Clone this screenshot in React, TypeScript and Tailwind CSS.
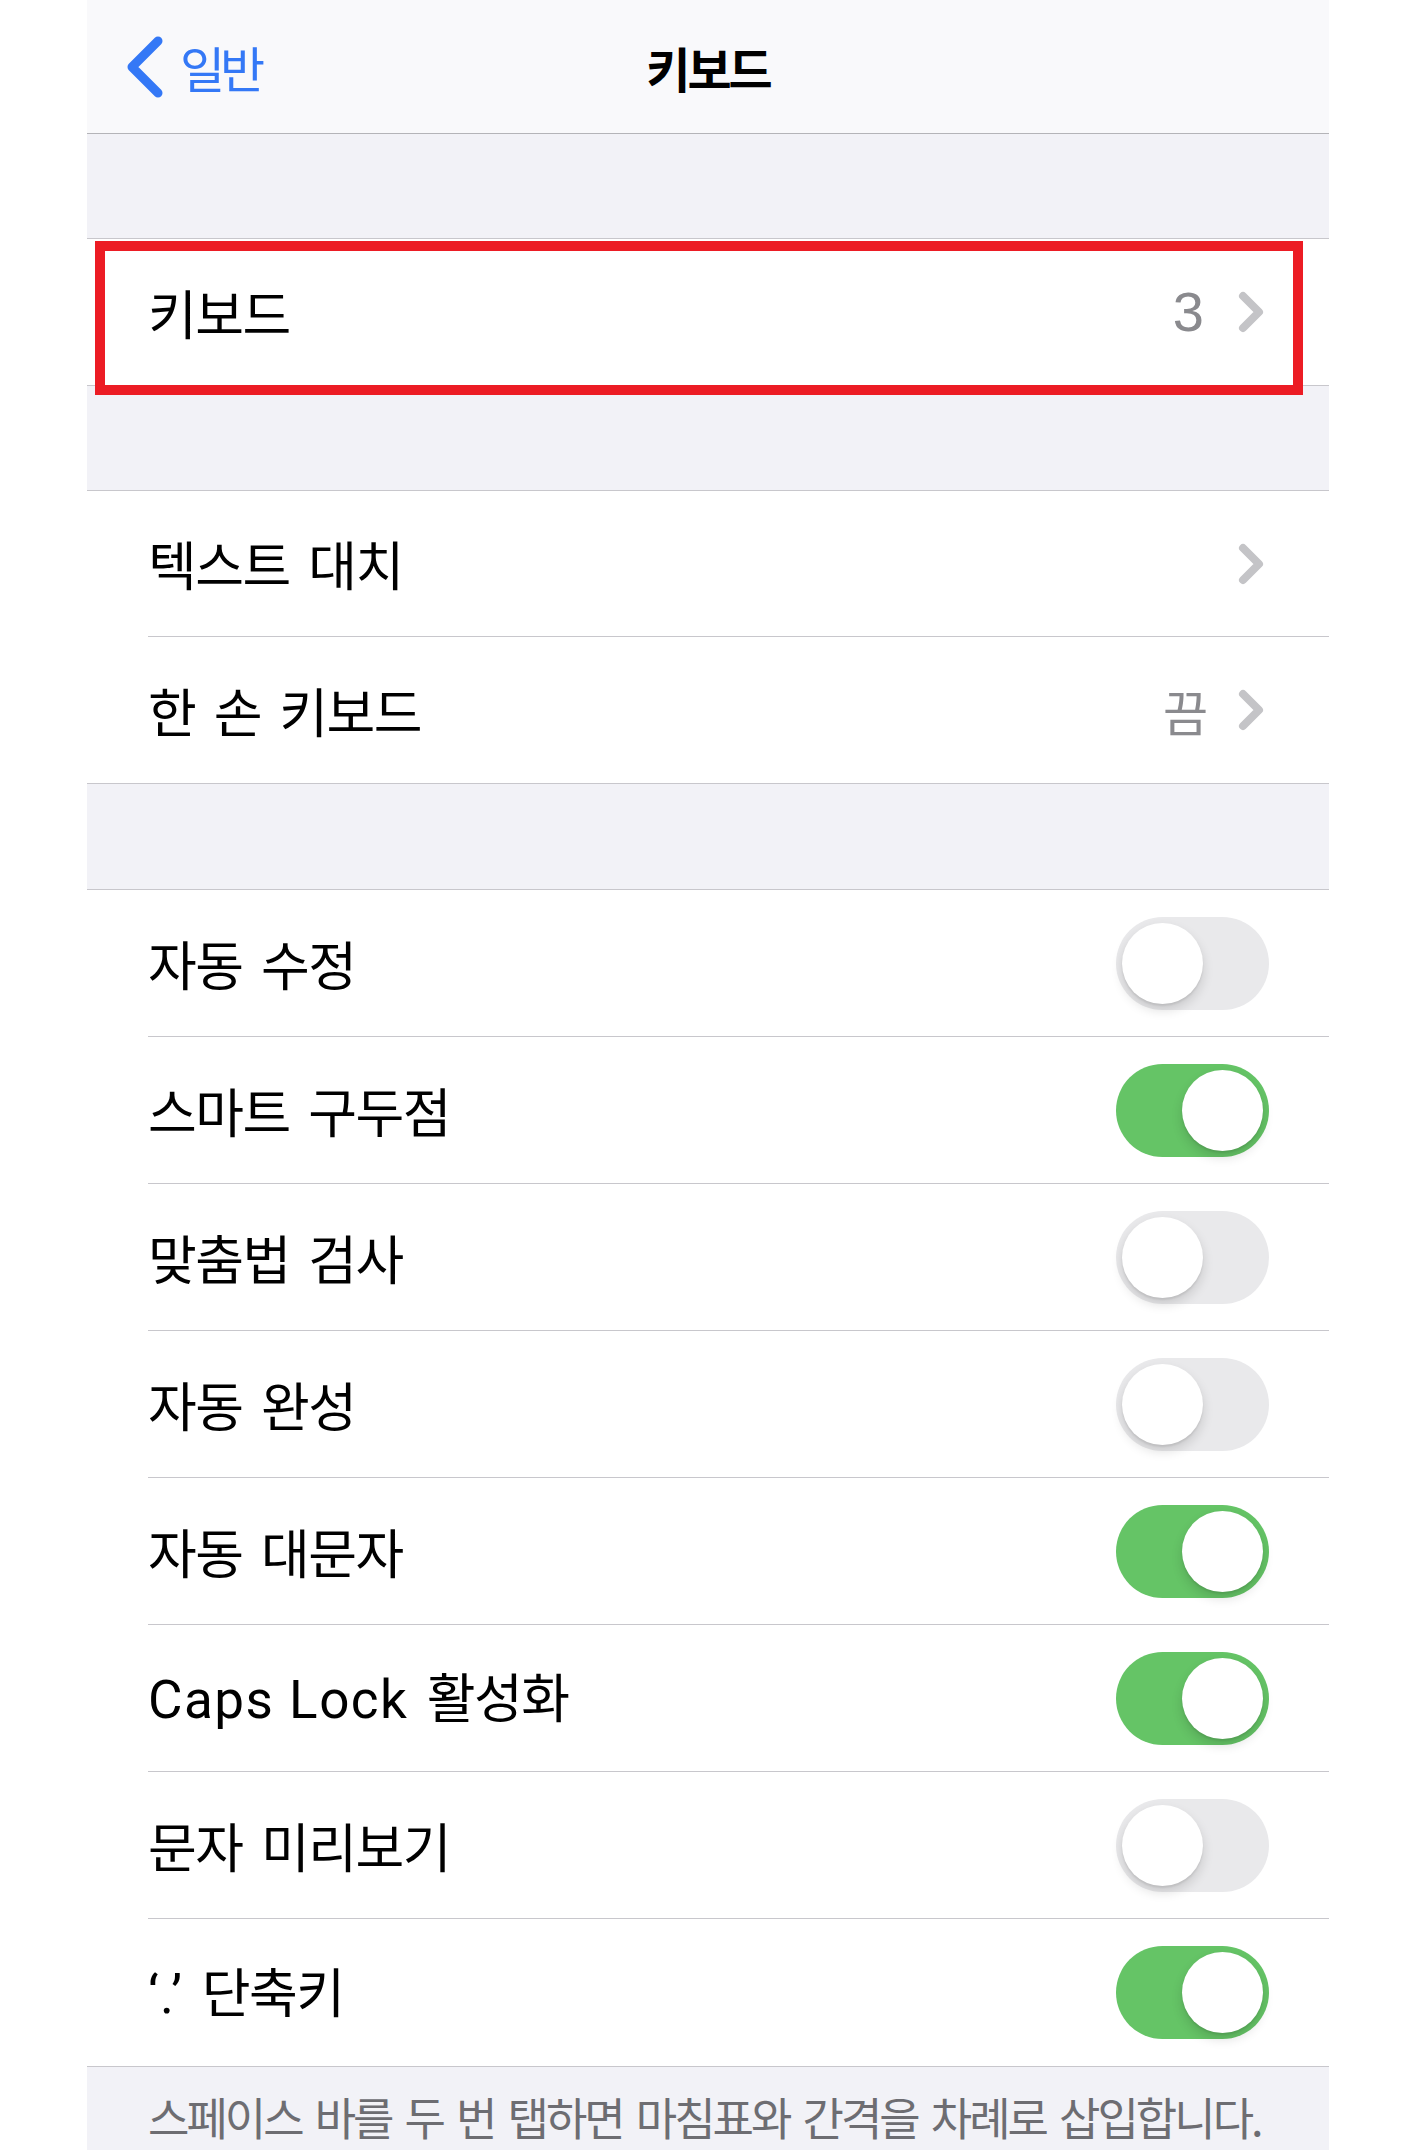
import React from 'react';

const toggles = [
  { label: '자동 수정', on: false },
  { label: '스마트 구두점', on: true },
  { label: '맞춤법 검사', on: false },
  { label: '자동 완성', on: false },
  { label: '자동 대문자', on: true },
  { label: 'Caps Lock 활성화', on: true, latin: 'Caps Lock', rest: '활성화' },
  { label: '문자 미리보기', on: false },
  { label: '‘.’ 단축키', on: true, latin: '‘.’', rest: '단축키' },
];

const Chevron = () => (
  <svg width="26" height="42" viewBox="0 0 26 42" className="mr-[5px] shrink-0">
    <polyline points="5,5 21,21 5,37" fill="none" stroke="#c4c4c7" strokeWidth="8" strokeLinecap="round" strokeLinejoin="round" />
  </svg>
);

const Toggle = ({ on }: { on: boolean }) => (
  <div
    className={
      on
        ? 'flex h-[93px] w-[153px] shrink-0 items-center justify-end rounded-full bg-[#65c466] px-[6px]'
        : 'flex h-[93px] w-[153px] shrink-0 items-center justify-start rounded-full bg-[#e9e9eb] px-[6px]'
    }
  >
    <div className="h-[81px] w-[81px] rounded-full bg-white shadow-[0_6px_12px_rgba(0,0,0,0.14),0_2px_2px_rgba(0,0,0,0.08)]" />
  </div>
);

const Row = ({
  children,
  right,
  last,
  tall,
}: {
  children: React.ReactNode;
  right?: React.ReactNode;
  last?: boolean;
  tall?: boolean;
}) => (
  <div className={tall ? 'flex h-[147px] items-stretch bg-white pl-[61px]' : 'flex h-[146px] items-stretch bg-white pl-[61px]'}>
    <div
      className={
        last
          ? 'flex flex-1 items-center justify-between pr-[60px]'
          : 'flex flex-1 items-center justify-between border-b border-[#c8c7cc] pr-[60px]'
      }
    >
      <span className="whitespace-nowrap text-[53px] leading-none tracking-[-1.5px] text-black [word-spacing:8px]">
        {children}
      </span>
      {right}
    </div>
  </div>
);

export default function App() {
  return (
    <div className="min-h-[2150px] w-full bg-white font-['Noto_Sans_CJK_KR','Noto_Sans',sans-serif]">
      <div className="ml-[87px] w-[1242px] overflow-hidden bg-[#f2f2f7]">
        {/* nav bar */}
        <div className="grid h-[134px] grid-cols-[1fr_auto_1fr] items-center border-b border-[#b4b4b8] bg-[#f9f9fb]">
          <div className="flex items-center gap-[16px] pl-[39px] text-[#3478f6]">
            <svg width="38" height="64" viewBox="0 0 38 64">
              <polyline points="32,6 6,32 32,58" fill="none" stroke="#3478f6" strokeWidth="9" strokeLinecap="round" strokeLinejoin="round" />
            </svg>
            <span className="text-[49px] leading-none tracking-[-5px]">일반</span>
          </div>
          <span className="text-[48px] font-semibold leading-none tracking-[-3px] text-black">키보드</span>
          <div />
        </div>

        <div className="h-[105px] border-b border-[#c8c7cc] bg-[#f2f2f7]" />

        <div className="relative">
          <Row
            last
            right={
              <div className="flex items-center gap-[34px]">
                <span className="font-['Liberation_Sans',sans-serif] text-[56px] leading-none text-[#8a8a8e]">3</span>
                <Chevron />
              </div>
            }
          >
            키보드
          </Row>
          <div className="absolute left-[8px] top-[2px] z-10 h-[154px] w-[1208px] border-[10px] border-[#ec1c24]" />
        </div>

        <div className="h-[106px] border-y border-[#c8c7cc] bg-[#f2f2f7]" />

        <Row right={<Chevron />}>텍스트 대치</Row>
        <Row
          last
          right={
            <div className="flex items-center gap-[30px]">
              <span className="text-[49px] leading-none text-[#8a8a8e]">끔</span>
              <Chevron />
            </div>
          }
        >
          한 손 키보드
        </Row>

        <div className="h-[107px] border-y border-[#c8c7cc] bg-[#f2f2f7]" />

        {toggles.map((t, i) => (
          <Row key={t.label} tall last={i === toggles.length - 1} right={<Toggle on={t.on} />}>
            {t.latin ? (
              <>
                <span className="font-['Roboto',sans-serif] tracking-[1.5px] [word-spacing:0px]">{t.latin}</span>{' '}
                {t.rest}
              </>
            ) : (
              t.label
            )}
          </Row>
        ))}

        {/* footer */}
        <div className="h-[84px] border-t border-[#c8c7cc] bg-[#f2f2f7] pl-[61px] pt-[27px]">
          <p className="whitespace-nowrap text-[45px] leading-none tracking-[-3px] text-[#6d6d72] [word-spacing:6px]">
            스페이스 바를 두 번 탭하면 마침표와 간격을 차례로 삽입합니다.
          </p>
        </div>
      </div>
    </div>
  );
}
